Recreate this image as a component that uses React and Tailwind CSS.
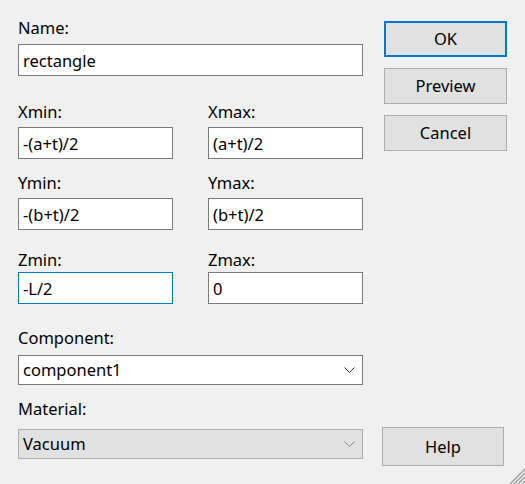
import React from 'react'

const font = { fontFamily: '"Noto Sans", "Segoe UI", Arial, sans-serif' }

const Field = ({ value, focused }) => (
  <input
    readOnly
    defaultValue={value}
    className={`block w-full h-[32px] bg-white border pl-[4px] text-[16.5px] text-black outline-none ${focused ? 'border-[#0078d7]' : 'border-[#7a7a7a]'}`}
  />
)

const Chevron = ({ color }) => (
  <svg width="11" height="6" viewBox="0 0 11 6" fill="none">
    <path d="M0.5 0.5 L5.5 5.5 L10.5 0.5" stroke={color} strokeWidth="1" />
  </svg>
)

const Btn = ({ children, primary, className = '' }) => (
  <button
    type="button"
    className={`w-[123px] h-[36px] bg-[#e1e1e1] text-[16.5px] text-black ${primary ? 'border-2 border-[#0078d7]' : 'border border-[#adadad]'} ${className}`}
  >
    {children}
  </button>
)

const App = () => {
  return (
    <div style={font} className="relative w-[525px] h-[484px] bg-[#f0f0f0] flex pl-[18px] text-[16.5px] leading-[20px] text-black overflow-hidden">
      <div className="w-[345px] flex flex-col pt-[18px]">
        <label className="block h-[20px]">Name:</label>
        <div className="mt-[6px]"><Field value="rectangle" /></div>

        <div className="grid grid-cols-2 gap-x-[35px] mt-[26px]">
          <label className="block h-[20px]">Xmin:</label>
          <label className="block h-[20px]">Xmax:</label>
          <div className="mt-[5px]"><Field value="-(a+t)/2" /></div>
          <div className="mt-[5px]"><Field value="(a+t)/2" /></div>
        </div>

        <div className="grid grid-cols-2 gap-x-[35px] mt-[14px]">
          <label className="block h-[20px]">Ymin:</label>
          <label className="block h-[20px]">Ymax:</label>
          <div className="mt-[5px]"><Field value="-(b+t)/2" /></div>
          <div className="mt-[5px]"><Field value="(b+t)/2" /></div>
        </div>

        <div className="grid grid-cols-2 gap-x-[35px] mt-[20px]">
          <label className="block h-[20px]">Zmin:</label>
          <label className="block h-[20px]">Zmax:</label>
          <div className="mt-[2px]"><Field value="-L/2" focused /></div>
          <div className="mt-[2px]"><Field value="0" /></div>
        </div>

        <label className="block h-[20px] mt-[24px]">Component:</label>
        <div className="mt-[7px] h-[30px] bg-white border border-[#7a7a7a] flex items-center justify-between pl-[4px] pr-[7px]">
          <span>component1</span>
          <Chevron color="#333333" />
        </div>

        <label className="block h-[20px] mt-[14px]">Material:</label>
        <div className="mt-[10px] h-[30px] bg-[#e1e1e1] border border-[#adadad] flex items-center justify-between pl-[4px] pr-[7px]">
          <span>Vacuum</span>
          <Chevron color="#8a8a8a" />
        </div>
      </div>

      <div className="ml-[21px] flex flex-col pt-[21px] pb-[18px]">
        <div className="flex flex-col gap-[11px]">
          <Btn primary>OK</Btn>
          <Btn>Preview</Btn>
          <Btn>Cancel</Btn>
        </div>
        <Btn className="mt-auto -ml-[2px] !w-[122px] !h-[39px]">Help</Btn>
      </div>

      <svg className="absolute right-0 bottom-0" width="18" height="18" viewBox="0 0 18 18">
        <g stroke="#a0a0a0" strokeWidth="1.5">
          <line x1="18" y1="3" x2="3" y2="18" />
          <line x1="18" y1="7" x2="7" y2="18" />
          <line x1="18" y1="11" x2="11" y2="18" />
          <line x1="18" y1="15" x2="15" y2="18" />
        </g>
      </svg>
    </div>
  )
}

export default App
